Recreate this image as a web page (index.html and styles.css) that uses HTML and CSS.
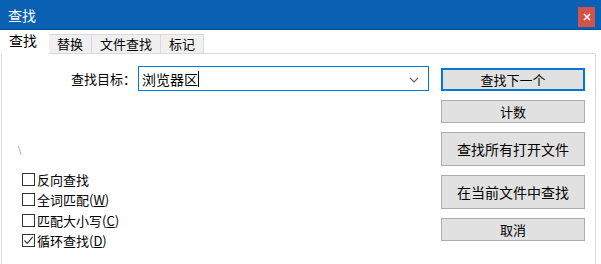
FILE: index.html
```html
<!DOCTYPE html>
<html>
<head lang="zh">
    <meta charset="UTF-8">
    <title>查找</title>
    <link rel="stylesheet" href="styles.css">
</head>
<body>
<div class="win">
    <div class="title">
        <span>查找</span>
        <em class="close">
            <svg width="8" height="8" viewBox="0 0 8 8"><path d="M1 1L7 7M7 1L1 7" stroke="#fff" stroke-width="1.6"/></svg>
        </em>
    </div>
    <ul class="tabs">
        <li class="on">查找</li>
        <li>替换</li>
        <li>文件查找</li>
        <li>标记</li>
    </ul>
    <div class="panel">
        <div class="left">
            <div class="row">
                <label>查找目标：</label>
                <div class="combo">
                    <span class="val">浏览器区</span><i class="caret"></i>
                    <svg class="arrow" width="10" height="6" viewBox="0 0 10 6"><path d="M1 1L5 5L9 1" fill="none" stroke="#666" stroke-width="1.2"/></svg>
                </div>
            </div>
            <div class="mark">\</div>
            <ul class="checks">
                <li><span class="box"></span>反向查找</li>
                <li><span class="box"></span>全词匹配(<u>W</u>)</li>
                <li><span class="box"></span>匹配大小写(<u>C</u>)</li>
                <li><span class="box">
                    <svg width="11" height="11" viewBox="0 0 11 11"><path d="M1.5 5.5L4.2 8.3L9.8 1.8" fill="none" stroke="#333" stroke-width="1.2"/></svg>
                </span>循环查找(<u>D</u>)</li>
            </ul>
        </div>
        <div class="btns">
            <button class="btn def">查找下一个</button>
            <button class="btn">计数</button>
            <button class="btn tall">查找所有打开文件</button>
            <button class="btn tall">在当前文件中查找</button>
            <button class="btn">取消</button>
        </div>
    </div>
</div>
</body>
</html>
```

FILE: styles.css
```css
* {
    padding: 0;
    margin: 0;
    box-sizing: border-box;
    font-family: "Noto Sans CJK SC", "Liberation Sans", sans-serif;
    font-size: 13px;
}
ul{list-style: none;}
body{background: #fff;}
.win{
    width: 601px;
    height: 264px;
    background: #fff;
    overflow: hidden;
}
.title{
    display: flex;
    align-items: center;
    justify-content: space-between;
    height: 30px;
    padding: 0 6px 0 8px;
    background: #0a60b2;
    border-bottom: 1px solid #0a4f92;
    color: #fff;
}
.title span{
    font-size: 14px;
    color: #fff;
}
.title .close{
    display: flex;
    align-items: center;
    justify-content: center;
    width: 17px;
    height: 20px;
    margin-top: 4px;
    background: #d2534c;
}
.tabs{
    display: flex;
    align-items: flex-end;
    height: 24px;
    padding-left: 1px;
}
.tabs li{
    height: 20px;
    line-height: 18px;
    padding: 0 8px;
    background: #f0f0f0;
    border: 1px solid #d9d9d9;
    border-bottom: none;
    border-left: none;
    color: #000;
}
.tabs li.on{
    height: 24px;
    line-height: 20px;
    width: 48px;
    padding-left: 8px;
    background: #fff;
    border: none;
    font-size: 14px;
}
.panel{
    display: flex;
    height: 211px;
    margin-left: 1px;
    width: 595px;
    border: 1px solid #d9d9d9;
    border-top: none;
    border-bottom: none;
    position: relative;
}
.panel:before{/*上边框,活动标签处断开*/
    content: "";
    position: absolute;
    left: 47px;
    right: 0;
    top: -1px;
    border-top: 1px solid #d9d9d9;
}
.left{
    width: 427px;
}
.row{
    display: flex;
    justify-content: flex-end;
    align-items: center;
    margin-top: 12px;
}
.row label{
    margin-right: 2px;
    color: #000;
}
.combo{
    display: flex;
    align-items: center;
    width: 291px;
    height: 25px;
    padding-left: 3px;
    border: 1px solid #0078d7;
    position: relative;
}
.combo .val{
    font-size: 14px;
    color: #000;
}
.combo .caret{
    display: inline-block;
    width: 1px;
    height: 16px;
    background: #000;
}
.combo .arrow{
    position: absolute;
    right: 9px;
    top: 10px;
}
.mark{
    margin: 52px 0 0 16px;
    height: 18px;
    line-height: 14px;
    font-size: 9px;
    color: #888;
}
.checks{
    margin: 8px 0 0 20px;
}
.checks li{
    display: flex;
    align-items: center;
    height: 20.5px;
    color: #000;
}
.checks u{
    font-size: 13px;
}
.checks .box{
    display: flex;
    align-items: center;
    justify-content: center;
    width: 13px;
    height: 13px;
    margin-right: 2px;
    border: 1px solid #333;
    background: #fff;
}
.btns{
    display: flex;
    flex-direction: column;
    gap: 9px;
    width: 144px;
    margin: 14px 0 0 12px;
}
.btn{
    height: 23px;
    background: #e1e1e1;
    border: 1px solid #adadad;
    color: #000;
    font-size: 13px;
}
.btn.def{
    border: 2px solid #0078d7;
}
.btn.tall{
    height: 34px;
    font-size: 14px;
}
```
